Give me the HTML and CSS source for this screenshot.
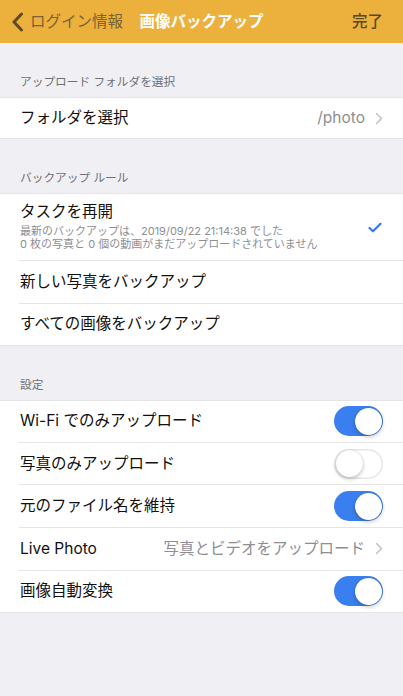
FILE: index.html
```html
<!DOCTYPE html>
<html lang="ja">
<head>
<meta charset="utf-8">
<title>画像バックアップ</title>
<link rel="stylesheet" href="styles.css">
</head>
<body>
<div class="screen">
  <header class="navbar">
    <div class="nav-left">
      <svg class="back-icon" width="13" height="20" viewBox="0 0 13 20"><path d="M10.5 2 L3 10 L10.5 18" fill="none" stroke="#5f4c22" stroke-width="3" stroke-linecap="round" stroke-linejoin="round"/></svg>
      <span class="back-text">ログイン情報</span>
    </div>
    <div class="nav-title">画像バックアップ</div>
    <div class="nav-right"><span class="done">完了</span></div>
  </header>

  <div class="section-header">アップロード フォルダを選択</div>
  <div class="group">
    <div class="row">
      <span class="label">フォルダを選択</span>
      <span class="value">/photo</span>
      <svg class="chev" width="8" height="13" viewBox="0 0 8 13"><path d="M1.5 1.5 L6.5 6.5 L1.5 11.5" fill="none" stroke="#c4c4c8" stroke-width="1.6" stroke-linecap="round" stroke-linejoin="round"/></svg>
    </div>
  </div>

  <div class="section-header">バックアップ ルール</div>
  <div class="group">
    <div class="row row-task">
      <div class="task-text">
        <div class="label">タスクを再開</div>
        <div class="sub">最新のバックアップは、2019/09/22 21:14:38 でした<br>0 枚の写真と 0 個の動画がまだアップロードされていません</div>
      </div>
      <svg class="check" width="14" height="11" viewBox="0 0 14 11"><path d="M1.5 6 L5 9.2 L12.5 1.8" fill="none" stroke="#3478f6" stroke-width="2.2" stroke-linecap="round" stroke-linejoin="round"/></svg>
    </div>
    <div class="row"><span class="label">新しい写真をバックアップ</span></div>
    <div class="row"><span class="label">すべての画像をバックアップ</span></div>
  </div>

  <div class="section-header">設定</div>
  <div class="group">
    <div class="row"><span class="label">Wi-Fi でのみアップロード</span><span class="toggle on"><span class="knob"></span></span></div>
    <div class="row"><span class="label">写真のみアップロード</span><span class="toggle"><span class="knob"></span></span></div>
    <div class="row"><span class="label">元のファイル名を維持</span><span class="toggle on"><span class="knob"></span></span></div>
    <div class="row">
      <span class="label">Live Photo</span>
      <span class="value">写真とビデオをアップロード</span>
      <svg class="chev" width="8" height="13" viewBox="0 0 8 13"><path d="M1.5 1.5 L6.5 6.5 L1.5 11.5" fill="none" stroke="#c4c4c8" stroke-width="1.6" stroke-linecap="round" stroke-linejoin="round"/></svg>
    </div>
    <div class="row"><span class="label">画像自動変換</span><span class="toggle on"><span class="knob"></span></span></div>
  </div>
</div>
</body>
</html>
```

FILE: styles.css
```css
* { box-sizing: border-box; }
html, body {
  margin: 0;
  padding: 0;
  background: #efeff4;
}
body {
  font-family: Inter, "Noto Sans CJK JP", sans-serif;
  font-size: 15.5px;
  color: #111;
}
.screen {
  width: 403px;
  min-height: 696px;
  background: #efeff4;
}
.navbar {
  height: 43px;
  background: #ecb13d;
  display: grid;
  grid-template-columns: 1fr auto 1fr;
  align-items: center;
}
.nav-left {
  display: flex;
  align-items: center;
  padding-left: 11px;
  gap: 6px;
}
.back-icon { display: block; }
.back-text {
  color: #7a6332;
  font-size: 15.5px;
  line-height: 20px;
}
.nav-title {
  color: #fff;
  font-weight: 700;
  font-size: 15.5px;
  line-height: 20px;
}
.nav-right {
  display: flex;
  justify-content: flex-end;
  padding-right: 20px;
}
.done {
  color: #5a4823;
  font-weight: 500;
  font-size: 15.5px;
  line-height: 20px;
}
.section-header {
  height: 54px;
  display: flex;
  align-items: flex-end;
  padding: 0 20px 8px;
  font-size: 11.7px;
  line-height: 14px;
  color: #6f6f74;
}
.group {
  background: #fff;
  border-top: 1px solid #e4e4e8;
  border-bottom: 1px solid #e4e4e8;
}
.row {
  height: 42.6px;
  margin-left: 19px;
  padding: 0 20px 0 1px;
  display: flex;
  align-items: center;
  border-bottom: 1px solid #e4e4e8;
}
.group .row:first-child { height: 41.6px; }
.group .row:last-child { border-bottom: none; height: 41.6px; }
.group .row:only-child { height: 40px; }
.label {
  flex: 1;
  line-height: 20px;
  white-space: nowrap;
}
.value {
  color: #8e8e93;
  line-height: 20px;
  margin-right: 10px;
  white-space: nowrap;
}
.chev { display: block; flex: none; }
.group .row-task:first-child { height: 67px; }
.task-text {
  flex: 1;
  display: flex;
  flex-direction: column;
  padding-bottom: 1px;
}
.sub {
  margin-top: 3px;
  font-size: 11px;
  line-height: 13.5px;
  color: #8e8e93;
  white-space: nowrap;
}
.check { display: block; flex: none; margin-right: 1px; }
.toggle {
  flex: none;
  position: relative;
  width: 49px;
  height: 30px;
  border-radius: 15px;
  background: #fff;
  box-shadow: inset 0 0 0 1.5px #e6e6e9;
}
.toggle.on {
  background: #3a7ff0;
  box-shadow: none;
}
.knob {
  position: absolute;
  top: 1.5px;
  left: 1.5px;
  width: 27px;
  height: 27px;
  border-radius: 50%;
  background: #fff;
  box-shadow: 0 2px 4px rgba(0,0,0,0.22), 0 0 1px rgba(0,0,0,0.25);
}
.toggle.on .knob {
  left: auto;
  right: 1.5px;
}
```
